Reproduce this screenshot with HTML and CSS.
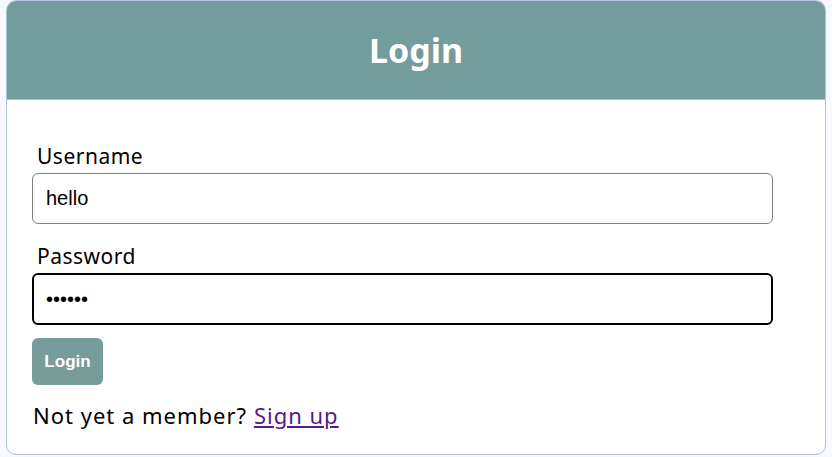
FILE: index.html
```html
<!DOCTYPE html>
<html>
<head>
<meta charset="utf-8">
<link rel="stylesheet" href="styles.css">
</head>
<body>
<div class="card">
  <div class="card-header"><h1 class="title">Login</h1></div>
  <form class="card-body">
    <label class="label" for="u">Username</label>
    <input class="input" id="u" type="text" value="hello">
    <label class="label" for="p">Password</label>
    <input class="input input-focus" id="p" type="password" value="secret">
    <button class="btn" type="button">Login</button>
    <p class="footer">Not yet a member? <a class="link" href="#">Sign up</a></p>
  </form>
</div>
</body>
</html>
```

FILE: styles.css
```css
html, body {
  margin: 0;
  padding: 0;
  background: #f8f8ff;
}
body {
  padding: 0 6px;
  font-family: "Noto Sans", sans-serif;
}
.card {
  background: #fff;
  border: 1px solid #b0c4de;
  border-radius: 10px;
  overflow: hidden;
  height: 455px;
  box-sizing: border-box;
}
.card-header {
  background: #739c9c;
  border-bottom: 1px solid #b0c4de;
  height: 98px;
  display: flex;
  align-items: center;
  justify-content: center;
}
.title {
  margin: 0;
  color: #fff;
  font-size: 34px;
  font-weight: 700;
}
.card-body {
  display: flex;
  flex-direction: column;
  align-items: flex-start;
  padding: 39px 52px 0 25px;
}
.label {
  font-size: 21px;
  letter-spacing: 0.5px;
  color: #000;
  margin-left: 5px;
  line-height: 34px;
}
.input {
  box-sizing: border-box;
  width: 741px;
  height: 51px;
  border: 1px solid #808080;
  border-radius: 6px;
  padding: 0 13px;
  font-family: "Liberation Sans", Arial, sans-serif;
  font-size: 20px;
  color: #000;
  margin-bottom: 15px;
  outline: none;
}
.input-focus {
  height: 52px;
  border: 2px solid #000;
  padding: 0 12px;
  margin-bottom: 13px;
}
.btn {
  background: #769c9c;
  color: #fff;
  border: none;
  border-radius: 6px;
  width: 71px;
  height: 47px;
  font-family: "Liberation Sans", Arial, sans-serif;
  font-size: 17px;
  font-weight: 700;
  padding: 0;
}
.footer {
  margin: 14px 0 0 1px;
  font-size: 22px;
  letter-spacing: 1px;
  line-height: 32px;
}
.link {
  color: #551a8b;
}
```
